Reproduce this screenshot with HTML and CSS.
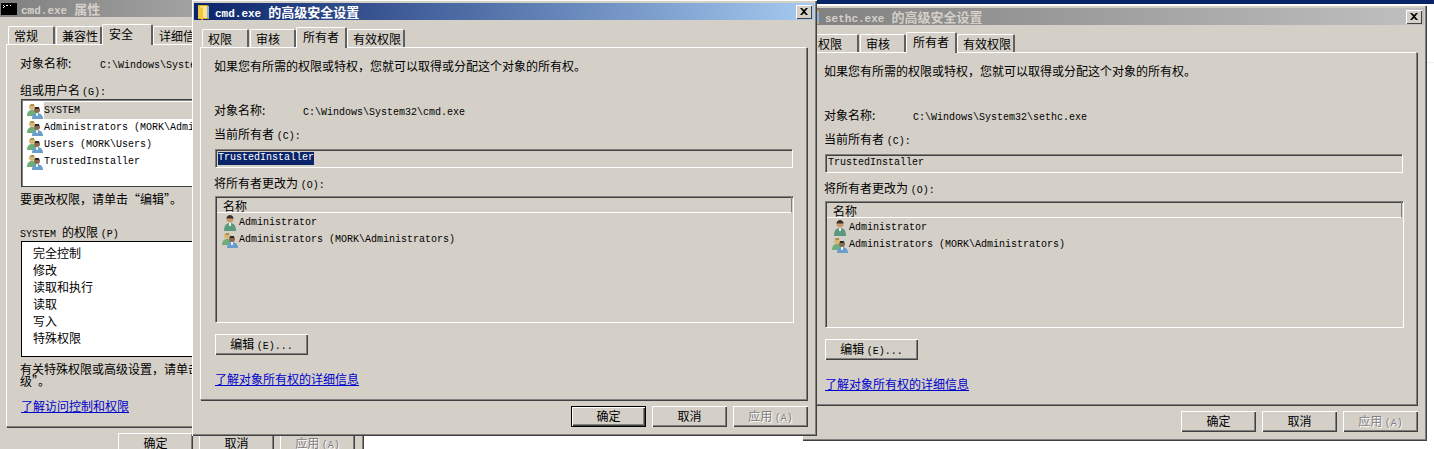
FILE: index.html
```html
<!DOCTYPE html>
<html lang="zh-CN">
<head>
    <meta charset="UTF-8">
    <title>cmd.exe 的高级安全设置</title>
    <link rel="stylesheet" href="styles.css">
</head>
<body>

    <svg class="defs" width="0" height="0" aria-hidden="true">
        <symbol id="icon-console" viewBox="0 0 16 12">
            <rect width="16" height="12" fill="#000"/>
            <path d="M2 2h1v1H2zM3 3h1v1H3zM2 4h1v1H2zM5 2h2v1H5zM9 2h1v1H9z" fill="#fff"/>
        </symbol>
        <symbol id="icon-folder" viewBox="0 0 13 16">
            <path d="M1 1h9l2 1v13H1z" fill="#d9a92e"/>
            <path d="M3 2h7v12H3z" fill="#fbe58a"/>
            <path d="M1 2l5 2v12l-5-2z" fill="#f3c63f"/>
            <path d="M10 3h2v11h-2z" fill="#8fb0d8"/>
        </symbol>
        <symbol id="icon-group" viewBox="0 0 16 16">
            <circle cx="5" cy="4" r="3" fill="#d8b878"/>
            <path d="M4 1h3v2H3z" fill="#a89048"/>
            <path d="M0 13c0-4 2-6 5-6s5 2 5 6z" fill="#6fae78"/>
            <circle cx="10" cy="7" r="3" fill="#8a6a4a"/>
            <path d="M8 4h4v2H8z" fill="#2a2a2a"/>
            <path d="M5 16c0-4 2-6 5-6s6 2 6 6z" fill="#6a9ccc"/>
            <path d="M9 10h2v3H9z" fill="#e8f0f8"/>
        </symbol>
        <symbol id="icon-user" viewBox="0 0 16 16">
            <circle cx="8" cy="4" r="3.5" fill="#c89a70"/>
            <path d="M4.500 3.500c0-2 2-3.500 3.500-3.500s3.500 1.500 3.500 3.500z" fill="#3a3028"/>
            <path d="M2 16c0-6 2.500-8 6-8s6 2 6 8z" fill="#5c9a80"/>
            <path d="M7 8h2v3H7z" fill="#e8efe8"/>
        </symbol>
        <symbol id="icon-close" viewBox="0 0 8 7">
            <path d="M0 0h2l2 2 2-2h2L5 3.5 8 7H6L4 5 2 7H0l3-3.5z" fill="#000"/>
        </symbol>
    </svg>

    <div class="far-title"></div>
    <div class="far-line"></div>

    <!-- file properties window, mostly covered -->
    <div class="window window-props">
        <div class="titlebar inactive">
            <svg class="title-console"><use href="#icon-console"/></svg>
            <span class="title-text"><span class="en-title">cmd.exe</span>属性</span>
        </div>
        <div class="tabs">
            <div class="tab w47">常规</div>
            <div class="tab w46">兼容性</div>
            <div class="tab active w51">安全</div>
            <div class="tab w58">详细信息</div>
        </div>
        <div class="panel panel-props">
            <div class="row"><span class="label-props">对象名称:</span><span class="en">C:\Windows\System32\cmd.exe</span></div>
            <div class="row gap-10">组或用户名<span class="en key">(G):</span></div>
            <div class="user-list">
                <div class="user selected"><svg class="icon"><use href="#icon-group"/></svg><span class="en">SYSTEM</span></div>
                <div class="user"><svg class="icon"><use href="#icon-group"/></svg><span class="en">Administrators (MORK\Administrators)</span></div>
                <div class="user"><svg class="icon"><use href="#icon-group"/></svg><span class="en">Users (MORK\Users)</span></div>
                <div class="user"><svg class="icon"><use href="#icon-group"/></svg><span class="en">TrustedInstaller</span></div>
            </div>
            <div class="row gap-4">要更改权限，请单击“编辑”。</div>
            <div class="row gap-16"><span class="en">SYSTEM </span>的权限 <span class="en">(P)</span></div>
            <div class="perm-list">
                <div class="perm">完全控制</div>
                <div class="perm">修改</div>
                <div class="perm">读取和执行</div>
                <div class="perm">读取</div>
                <div class="perm">写入</div>
                <div class="perm">特殊权限</div>
            </div>
            <div class="note">有关特殊权限或高级设置，请单击“高<br>级”。</div>
            <div class="row gap-11"><a class="link" href="#">了解访问控制和权限</a></div>
        </div>
        <div class="footer">
            <button class="btn">确定</button>
            <button class="btn">取消</button>
            <button class="btn disabled">应用 <span class="en">(A)</span></button>
        </div>
    </div>

    <!-- sethc.exe window -->
    <div class="window window-sethc">
        <div class="titlebar inactive">
            <svg class="title-folder"><use href="#icon-folder"/></svg>
            <span class="title-text"><span class="en-title">sethc.exe</span>的高级安全设置</span>
            <span class="close"><svg class="close-x"><use href="#icon-close"/></svg></span>
        </div>
        <div class="tabs">
            <div class="tab w47">权限</div>
            <div class="tab w46">审核</div>
            <div class="tab active w51">所有者</div>
            <div class="tab w58">有效权限</div>
        </div>
        <div class="panel">
            <div class="row">如果您有所需的权限或特权，您就可以取得或分配这个对象的所有权。</div>
            <div class="row gap-27"><span class="label-owner">对象名称:</span><span class="en">C:\Windows\System32\sethc.exe</span></div>
            <div class="row gap-7">当前所有者 <span class="en">(C):</span></div>
            <div class="owner-box"><span class="en picked plain">TrustedInstaller</span></div>
            <div class="row gap-7">将所有者更改为 <span class="en">(O):</span></div>
            <div class="listview">
                <div class="list-head">名称</div>
                <div class="list-row"><svg class="icon"><use href="#icon-user"/></svg><span class="en">Administrator</span></div>
                <div class="list-row"><svg class="icon"><use href="#icon-group"/></svg><span class="en">Administrators (MORK\Administrators)</span></div>
            </div>
            <button class="btn btn-edit">编辑 <span class="en">(E)...</span></button>
            <div class="row gap-16"><a class="link" href="#">了解对象所有权的详细信息</a></div>
        </div>
        <div class="footer">
            <button class="btn">确定</button>
            <button class="btn">取消</button>
            <button class="btn disabled">应用 <span class="en">(A)</span></button>
        </div>
    </div>

    <!-- cmd.exe window, active -->
    <div class="window window-cmd">
        <div class="titlebar">
            <svg class="title-folder"><use href="#icon-folder"/></svg>
            <span class="title-text"><span class="en-title">cmd.exe</span>的高级安全设置</span>
            <span class="close"><svg class="close-x"><use href="#icon-close"/></svg></span>
        </div>
        <div class="tabs">
            <div class="tab w47">权限</div>
            <div class="tab w46">审核</div>
            <div class="tab active w51">所有者</div>
            <div class="tab w58">有效权限</div>
        </div>
        <div class="panel">
            <div class="row">如果您有所需的权限或特权，您就可以取得或分配这个对象的所有权。</div>
            <div class="row gap-27"><span class="label-owner">对象名称:</span><span class="en">C:\Windows\System32\cmd.exe</span></div>
            <div class="row gap-7">当前所有者 <span class="en">(C):</span></div>
            <div class="owner-box"><span class="en picked">TrustedInstaller</span></div>
            <div class="row gap-7">将所有者更改为 <span class="en">(O):</span></div>
            <div class="listview">
                <div class="list-head">名称</div>
                <div class="list-row"><svg class="icon"><use href="#icon-user"/></svg><span class="en">Administrator</span></div>
                <div class="list-row"><svg class="icon"><use href="#icon-group"/></svg><span class="en">Administrators (MORK\Administrators)</span></div>
            </div>
            <button class="btn btn-edit">编辑 <span class="en">(E)...</span></button>
            <div class="row gap-16"><a class="link" href="#">了解对象所有权的详细信息</a></div>
        </div>
        <div class="footer">
            <button class="btn default">确定</button>
            <button class="btn">取消</button>
            <button class="btn disabled">应用 <span class="en">(A)</span></button>
        </div>
    </div>

</body>
</html>
```

FILE: styles.css
```css
* {
    box-sizing: border-box;
}
html, body {
    height: 100%;
}
body {
    margin: 0;
    position: relative;
    overflow: hidden;
    background-color: #fff;
    color: #000;
    font-family: "Noto Sans CJK SC", "Liberation Sans", sans-serif;
    font-size: 12px;
}
.defs {
    position: absolute;
}
.en {
    font-family: "Liberation Mono", monospace;
    font-size: 10px;
    white-space: pre;
}
.en-title {
    margin-right: 7px;
    font-family: "Liberation Mono", monospace;
    font-size: 11px;
}
.key {
    margin-left: 2px;
}

/* things behind the windows */
.far-title {
    position: absolute;
    left: 816px;
    right: 0;
    top: 0;
    height: 4px;
    background-color: #0a246a;
}
.far-line {
    position: absolute;
    left: 1427px;
    right: 0;
    top: 62px;
    height: 1px;
    background-color: #eeeeee;
}

/* windows */
.window {
    position: absolute;
    z-index: 0;
    padding: 3px 3px 3px 2px;
    background-color: #d4d0c8;
    box-shadow: inset 1px 1px #fff, inset -1px -1px #404040, inset -2px -2px #808080;
}
.window-props {
    left: -2px;
    top: -3px;
    width: 366px;
    height: 470px;
}
.window-sethc {
    left: 802px;
    top: 5px;
    width: 625px;
    height: 436px;
}
.window-cmd {
    left: 192px;
    top: 0;
    width: 625px;
    height: 436px;
}

.titlebar {
    display: flex;
    align-items: center;
    height: 17px;
    background: linear-gradient(to right, #0a246a, #a6caf0);
    color: #fff;
}
.titlebar.inactive {
    background: linear-gradient(to right, #808080, #c0c0c0);
    color: #d4d0c8;
}
.title-text {
    font-size: 13px;
    font-weight: bold;
    white-space: nowrap;
}
.title-console {
    width: 16px;
    height: 12px;
    margin: 0 4px 0 1px;
}
.title-folder {
    width: 13px;
    height: 16px;
    margin: 0 5px 0 3px;
}
.close {
    display: flex;
    align-items: center;
    justify-content: center;
    width: 16px;
    height: 14px;
    margin-left: auto;
    margin-right: 2px;
    background-color: #d4d0c8;
    box-shadow: inset 1px 1px #fff, inset -1px -1px #404040;
}
.close-x {
    width: 8px;
    height: 7px;
}

/* tabs */
.tabs {
    display: flex;
    align-items: flex-end;
    position: relative;
    z-index: 1;
    height: 21px;
    margin: 7px 0 -1px 8px;
}
.tab {
    height: 18px;
    margin-bottom: 1px;
    padding: 1px 0 0 5px;
    line-height: 15px;
    white-space: nowrap;
    overflow: hidden;
    border-top: 1px solid #fff;
    border-left: 1px solid #fff;
    border-right: 2px solid #606060;
    border-radius: 2px 2px 0 0;
}
.tab.active {
    height: 21px;
    margin-bottom: 0;
    padding: 0 0 0 6px;
    line-height: 17px;
    background-color: #d4d0c8;
}
.w47 { width: 47px; margin-right: 1px; }
.w46 { width: 46px; }
.w51 { width: 51px; }
.w58 { width: 58px; }

.panel {
    width: 607px;
    height: 353px;
    margin-left: 6px;
    padding: 10px 14px 0;
    border: 1px solid;
    border-color: #fff #808080 #808080 #fff;
    box-shadow: 1px 1px #404040;
}
.panel-props {
    width: 348px;
    height: 383px;
}

.row {
    height: 17px;
    margin-left: -1px;
    line-height: 15px;
    white-space: nowrap;
}
.gap-4 { margin-top: 4px; }
.gap-7 { margin-top: 7px; }
.gap-10 { margin-top: 10px; }
.gap-11 { margin-top: 11px; }
.gap-16 { margin-top: 16px; }
.gap-27 { margin-top: 27px; }

.label-props {
    display: inline-block;
    width: 80px;
}
.label-owner {
    display: inline-block;
    width: 89px;
}
.link {
    margin-left: 1px;
    color: #0000cc;
}

/* owner text box */
.owner-box {
    height: 19px;
    width: 578px;
    margin-top: 6px;
    padding: 2px 0 0 2px;
    border: 1px solid;
    border-color: #808080 #fff #fff #808080;
    box-shadow: inset 1px 1px #404040;
    display: flex;
    align-items: flex-start;
}
.picked {
    height: 13px;
    line-height: 12px;
    background-color: #0a246a;
    color: #fff;
}
.picked.plain {
    background-color: transparent;
    color: #000;
}

/* list of owners */
.listview {
    width: 579px;
    height: 127px;
    margin-top: 4px;
    border: 1px solid;
    border-color: #808080 #fff #fff #808080;
    box-shadow: inset 1px 1px #404040;
}
.list-head {
    height: 16px;
    margin: 0 1px;
    padding-left: 6px;
    line-height: 18px;
    border-bottom: 1px solid #fff;
    border-right: 1px solid #808080;
}
.list-row {
    display: flex;
    align-items: center;
    height: 17px;
    padding-left: 6px;
}
.list-head + .list-row {
    margin-top: 1px;
}
.icon {
    flex: none;
    width: 16px;
    height: 16px;
    margin-right: 1px;
}

/* properties window lists */
.user-list {
    width: 318px;
    height: 88px;
    padding: 2px 0 0 5px;
    background-color: #fff;
    border: 1px solid #404040;
    box-shadow: inset 1px 1px #808080;
}
.user {
    display: flex;
    align-items: center;
    height: 17px;
}
.user .en {
    flex: 1;
    line-height: 17px;
    white-space: nowrap;
}
.user.selected .en {
    background-color: #d4d0c8;
}
.perm-list {
    width: 318px;
    height: 116px;
    padding: 3px 0 0 11px;
    background-color: #fff;
    border: 1px solid #000;
}
.perm {
    height: 17px;
    line-height: 15px;
}
.note {
    margin: 6px 0 0 -1px;
    line-height: 12px;
    white-space: nowrap;
}

/* buttons */
.footer {
    display: flex;
    justify-content: flex-end;
    gap: 6px;
    margin: 6px 6px 0 0;
}
.btn {
    display: block;
    width: 75px;
    height: 21px;
    padding: 0 0 2px;
    border: none;
    background-color: #d4d0c8;
    color: #000;
    font-family: inherit;
    font-size: 12px;
    box-shadow: inset 1px 1px #fff, inset -1px -1px #404040, inset -2px -2px #808080;
}
.btn.default {
    box-shadow: inset 0 0 0 1px #000, inset 2px 2px #fff, inset -2px -2px #404040, inset -3px -3px #808080;
}
.btn.disabled {
    color: #808080;
    text-shadow: 1px 1px #fff;
}
.btn-edit {
    width: 93px;
    margin-top: 11px;
}
```
